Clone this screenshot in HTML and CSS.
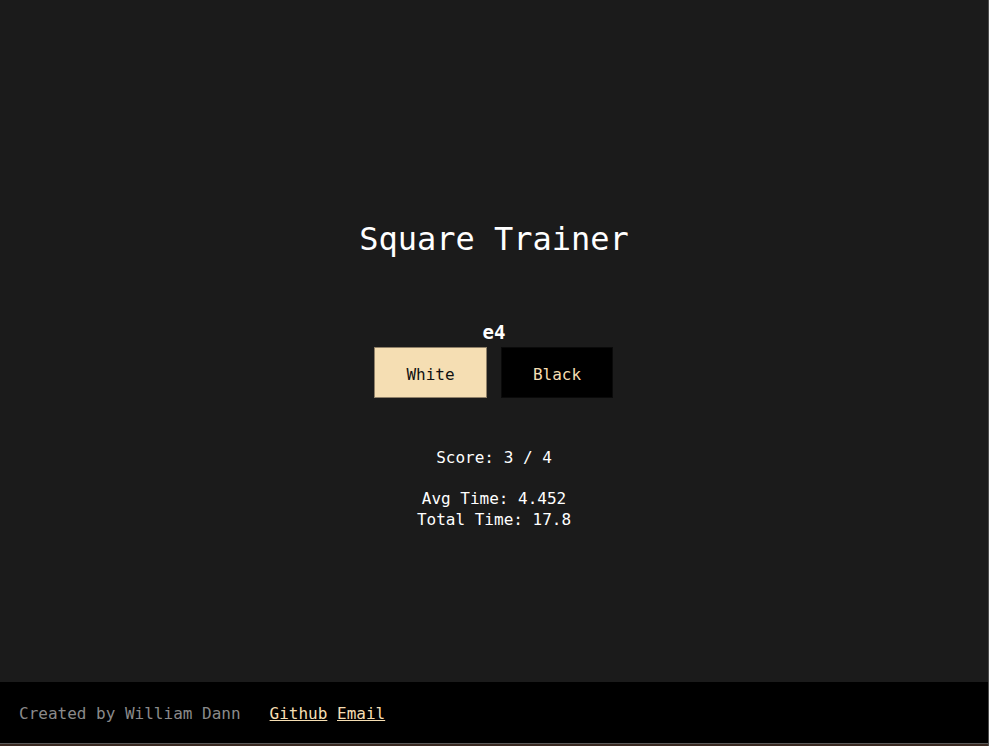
FILE: index.html
```html
<!DOCTYPE html>
<html lang="en">
<head>
<meta charset="utf-8">
<title>Square Trainer</title>
<link rel="stylesheet" href="styles.css">
</head>
<body>
<div class="page">
  <main class="main">
    <h1 class="title">Square Trainer</h1>
    <div class="square">e4</div>
    <div class="buttons">
      <button class="btn btn-white">White</button>
      <button class="btn btn-black">Black</button>
    </div>
    <p class="score">Score: 3 / 4</p>
    <div class="times">
      <p class="line">Avg Time: 4.452</p>
      <p class="line">Total Time: 17.8</p>
    </div>
  </main>
  <footer class="footer">
    <span class="credit">Created by William Dann</span>
    <span class="links"><a href="#">Github</a> <a href="#">Email</a></span>
  </footer>
  <div class="strip"></div>
</div>
</body>
</html>
```
FILE: styles.css
```css
html, body {
  margin: 0;
  padding: 0;
  background: #1b1b1b;
}
body {
  font-family: "DejaVu Sans Mono", "Liberation Mono", monospace;
  color: #ffffff;
}
.page {
  height: 746px;
  display: flex;
  flex-direction: column;
  border-right: 1px solid #4d4d4d;
  box-sizing: border-box;
}
.main {
  flex: 1;
  display: flex;
  flex-direction: column;
  align-items: center;
  padding-top: 220px;
  box-sizing: border-box;
}
.title {
  margin: 0;
  font-size: 32px;
  font-weight: normal;
  line-height: 38px;
  letter-spacing: 0;
}
.square {
  margin-top: 62px;
  font-size: 19px;
  line-height: 24px;
  font-weight: bold;
}
.buttons {
  margin-top: 3px;
  margin-right: 1px;
  display: flex;
  gap: 14px;
}
.btn {
  width: 112px;
  height: 51px;
  font-family: inherit;
  font-size: 16px;
  border: 1px solid #000;
  padding: 3px 0 0;
  cursor: pointer;
}
.btn-white {
  background: #f5deb3;
  color: #111;
  border-color: #8f8068;
  width: 113px;
}
.btn-black {
  background: #000;
  color: #f5deb3;
  border-color: #0a0a0a;
}
.score {
  margin: 49px 0 0;
  font-size: 16px;
  line-height: 21px;
}
.times {
  margin-top: 20px;
  display: flex;
  flex-direction: column;
  align-items: center;
}
.line {
  margin: 0;
  font-size: 16px;
  line-height: 21px;
}
.footer {
  height: 62px;
  background: #000;
  display: flex;
  align-items: center;
  padding-left: 19px;
  padding-top: 2px;
  box-sizing: border-box;
  font-size: 16px;
  border-bottom: 1px solid #5a5a5a;
}
.credit {
  color: #8a8a8a;
}
.links {
  margin-left: 29px;
}
.links a {
  color: #f5deb3;
  text-decoration: underline;
}
.strip {
  height: 2px;
  background: #3a2a22;
}
```
